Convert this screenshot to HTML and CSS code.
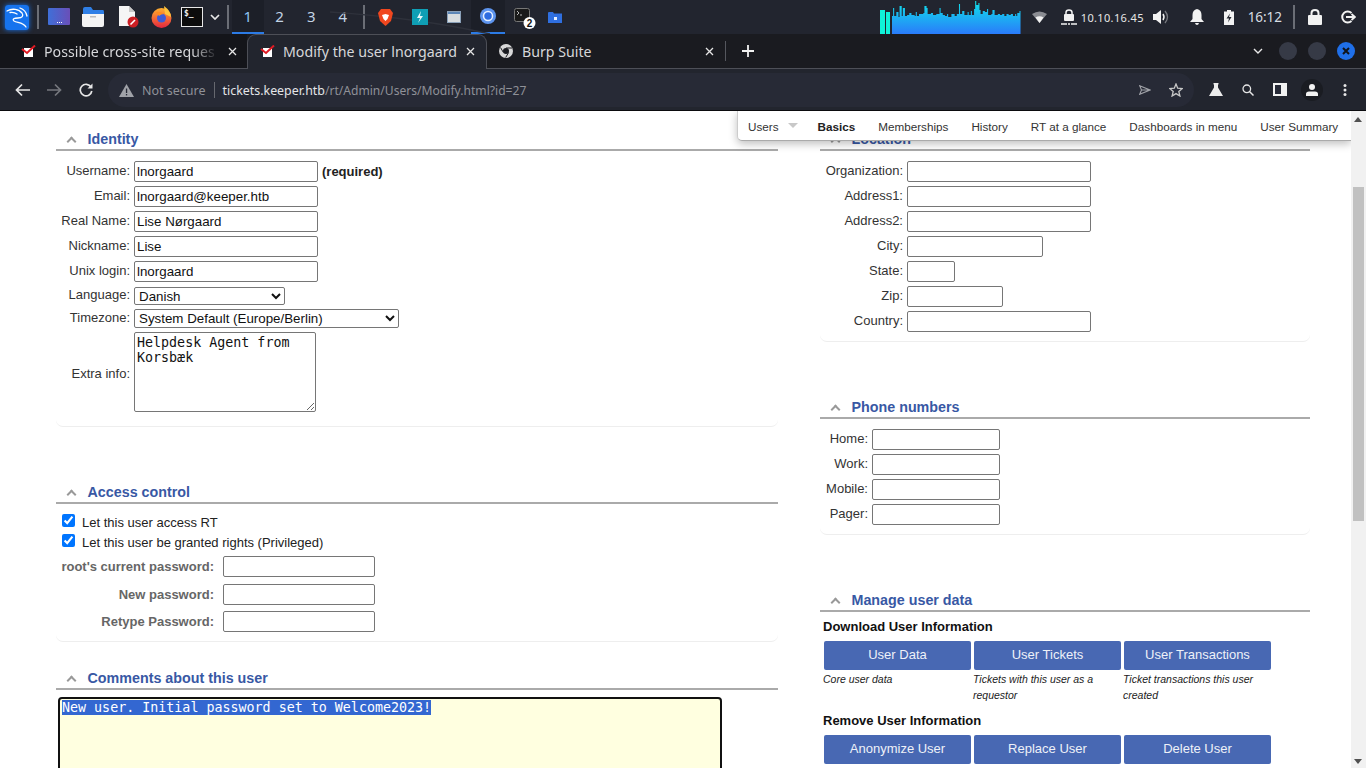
FILE: index.html
```html
<!DOCTYPE html>
<html lang="en">
<head>
    <meta charset="UTF-8">
    <title>Modify the user lnorgaard</title>
    <link rel="stylesheet" href="styles.css">
</head>
<body>

    <!-- desktop panel -->
    <div class="panel">
        <svg class="wall" width="1366" height="34" viewBox="0 0 1366 34"><path d="M330 12 Q420 18 490 34" fill="none" stroke="#2e313b" stroke-width="1.5"/></svg>
        <div class="slot s-kali">
            <svg width="24" height="25" viewBox="0 0 24 25"><rect width="24" height="25" rx="3" fill="#1673ee"/><path d="M2 6 C7 3 14 4 17 8 C19 11 17 13 13 13 C9 13 7 14 9 16 C12 18 18 17 21 22 M5 7.500 C8 7 10 7.500 12 9 M15 3 C18 4 21 6 22 11" fill="none" stroke="#fff" stroke-width="1.300" stroke-linecap="round"/></svg>
        </div>
        <div class="sep"></div>
        <div class="slot s-desk">
            <svg width="22" height="18" viewBox="0 0 22 18"><defs><linearGradient id="dk" x1="0" x2="1"><stop offset="0" stop-color="#3f6fd8"/><stop offset="1" stop-color="#6a4fb8"/></linearGradient></defs><rect width="22" height="17" rx="1" fill="url(#dk)"/><rect x="9" y="14" width="1" height="1" fill="#fff"/><rect x="11" y="14" width="1" height="1" fill="#fff"/><rect x="13" y="14" width="1" height="1" fill="#fff"/></svg>
        </div>
        <div class="slot s-files">
            <svg width="22" height="20" viewBox="0 0 22 20"><path d="M1 2 Q1 0 3 0 H9 L11 3 H21 Q22 3 22 5 V7 H1Z" fill="#2f7fe6"/><path d="M0 7 H22 V18 Q22 20 20 20 H2 Q0 20 0 18Z" fill="#f4f4f4"/><rect x="8" y="9" width="6" height="1.5" fill="#bbb"/></svg>
        </div>
        <div class="slot s-doc">
            <svg width="22" height="22" viewBox="0 0 22 22"><path d="M1 0 H11 L17 6 V20 H1Z" fill="#f5f5f5"/><path d="M11 0 L17 6 H11Z" fill="#c8c8c8"/><circle cx="15" cy="16" r="5.500" fill="#cc1f24"/><path d="M12.500 18.500 L17 14" stroke="#fff" stroke-width="1.600"/></svg>
        </div>
        <div class="slot s-fox">
            <svg width="21" height="22" viewBox="0 0 21 22"><defs><linearGradient id="fx" x1="0" y1="0" x2="0" y2="1"><stop offset="0" stop-color="#ffb02e"/><stop offset="1" stop-color="#e5263f"/></linearGradient></defs><circle cx="10.500" cy="12" r="10" fill="url(#fx)"/><path d="M13 0 Q20 5 20 11 L14 8Z" fill="#ffc33a"/><circle cx="10.500" cy="12" r="4.500" fill="#3f5bd6"/><path d="M5 6 Q9 5 13 8 Q10 8 8 10Z" fill="#ff8a1f"/></svg>
        </div>
        <div class="slot s-term">
            <div class="term-box">$_</div>
        </div>
        <div class="slot s-more">
            <svg width="10" height="6" viewBox="0 0 10 6"><path d="M1 1 L5 5 L9 1" fill="none" stroke="#e8e8e8" stroke-width="1.700"/></svg>
        </div>
        <div class="sep s-sep2"></div>
        <div class="ws active">1</div>
        <div class="ws">2</div>
        <div class="ws">3</div>
        <div class="ws">4</div>
        <div class="sep s-sep3"></div>
        <div class="slot s-brave">
            <svg width="15" height="17" viewBox="0 0 15 17"><path d="M3 0 H12 L15 4 L13 12 L7.500 17 L2 12 L0 4Z" fill="#f0471f"/><path d="M4 6 L7.500 5 L11 6 L9.500 10 L7.500 12 L5.500 10Z" fill="#fff"/></svg>
        </div>
        <div class="slot s-bolt">
            <svg width="16" height="16" viewBox="0 0 16 16"><rect width="16" height="16" fill="#0f9fb5"/><path d="M9 2 L5 9 H8 L6 14 L11 7 H8Z" fill="#e6f7fa"/></svg>
        </div>
        <div class="slot s-win">
            <svg width="14" height="12" viewBox="0 0 14 12"><rect x=".5" y=".5" width="13" height="11" fill="#d8dde0" stroke="#8aa0b8"/><rect x="1" y="1" width="12" height="2" fill="#5d87b8"/></svg>
        </div>
        <div class="ws-app">
            <svg width="16" height="16" viewBox="0 0 16 16"><circle cx="8" cy="8" r="8" fill="#5d94ee"/><circle cx="8" cy="8" r="4.500" fill="#2d6be0" stroke="#e4efff" stroke-width="1.500"/></svg>
        </div>
        <div class="slot s-term2">
            <svg width="22" height="22" viewBox="0 0 22 22"><rect x=".5" y=".5" width="15" height="13" rx="2" fill="#1a1a1a" stroke="#777"/><path d="M3 3 L5 5 L3 7 M6 7 H8" fill="none" stroke="#ddd" stroke-width=".8"/><circle cx="15.500" cy="15" r="6" fill="#fff"/><text x="15.500" y="18.500" font-size="10" font-weight="700" text-anchor="middle" font-family="Liberation Sans" fill="#111">2</text></svg>
        </div>
        <div class="slot s-folder">
            <svg width="14" height="11" viewBox="0 0 14 11"><path d="M0 1 Q0 0 1 0 H5 L6 1.500 H14 V11 H0Z" fill="#2f6fe0"/><rect x="6" y="5" width="3" height="3" fill="#e8f0ff"/></svg>
        </div>

        <div class="tray">
            <div class="cpu">
                <svg width="141" height="34" viewBox="0 0 141 34"><defs><linearGradient id="cp" x1="0" y1="0" x2="0" y2="1"><stop offset="0" stop-color="#0fe3ea"/><stop offset="1" stop-color="#2a7bfa"/></linearGradient></defs>
                    <rect x="0" y="10" width="5" height="24" fill="#0ff2d8"/><rect x="6" y="12" width="4" height="24" fill="#0ff2d8"/>
                    <path transform="translate(12 0) scale(1.08 1) translate(-12 0)" fill="url(#cp)" d="M12 34 V16 h1 V8 h1 V16 h2 V12 h2 V17 h1 V6 h2 V16 h1 V8 h2 V16 h2 V15 h2 V13 h2 V15 h3 V16 h1 V12 h1 V16 h2 V14 h4 V13 h1 V6 h2 V8 h1 V14 h3 V13 h2 V15 h3 V14 h3 V8 h1 V13 h2 V15 h2 V16 h2 V14 h1 V17 h3 V14 h3 V16 h2 V14 h2 V4 h1 V14 h2 V11 h2 V15 h3 V12 h1 V15 h2 V11 h1 V15 h2 V9 h1 V1 h1 V5 h2 V3 h1 V10 h1 V14 h2 V11 h2 V12 h2 V9 h1 V15 h3 V14 h1 V10 h2 V15 h3 V14 h2 V15 h2 V14 h2 V16 h2 V14 h2 V15 h2 V14 h2 V16 h2 V14 h1 V16 h1 V13 h2 V11 h1 V34Z"/></svg>
            </div>
            <div class="slot t-wifi">
                <svg width="15" height="12" viewBox="0 0 15 12"><path d="M0 3 Q7.500 -2 15 3 L7.500 12Z" fill="#8a8c92"/><path d="M3.500 6.500 Q7.500 4 11.500 6.500 L7.500 12Z" fill="#f0f0f0"/></svg>
            </div>
            <div class="slot t-lock">
                <svg width="16" height="16" viewBox="0 0 16 16"><rect x="3" y="5" width="10" height="7" rx="1" fill="#f2f2f2"/><path d="M5 5 V3.500 Q5 1 8 1 Q11 1 11 3.500 V5" fill="none" stroke="#f2f2f2" stroke-width="1.500"/><path d="M0 15 H6 M7 15 H9 M10 15 H16" stroke="#f2f2f2" stroke-width="1.500"/></svg>
            </div>
            <div class="ip">10.10.16.45</div>
            <div class="slot t-vol">
                <svg width="17" height="16" viewBox="0 0 17 16"><path d="M0 5 H3 L8 1 V15 L3 11 H0Z" fill="#f2f2f2"/><path d="M10 5 Q12 8 10 11" fill="none" stroke="#f2f2f2" stroke-width="1.500"/><path d="M12 2 Q17 8 12 14" fill="none" stroke="#77797f" stroke-width="1.300"/></svg>
            </div>
            <div class="slot t-bell">
                <svg width="14" height="16" viewBox="0 0 14 16"><path d="M7 0 Q11.500 1 11.500 6 V10 L14 13 H0 L2.500 10 V6 Q2.500 1 7 0Z" fill="#f2f2f2"/><path d="M5 14 H9 Q8.500 16 7 16 Q5.500 16 5 14Z" fill="#f2f2f2"/></svg>
            </div>
            <div class="slot t-batt">
                <svg width="10" height="15" viewBox="0 0 10 15"><path d="M3 0 H7 V1.500 H10 V15 H0 V1.500 H3Z" fill="#f2f2f2"/><path d="M6 3.500 L2.500 8.500 H5 L4 12.500 L7.500 7 H5Z" fill="#23262f"/></svg>
            </div>
            <div class="clock">16:12</div>
            <div class="sep s-sep4"></div>
            <div class="slot t-lock2">
                <svg width="14" height="16" viewBox="0 0 14 16"><rect y="6" width="14" height="10" rx="1" fill="#f2f2f2"/><path d="M3.500 6 V4 Q3.500 1 7 1 Q10.500 1 10.500 4 V6" fill="none" stroke="#f2f2f2" stroke-width="2"/></svg>
            </div>
            <div class="slot t-exit">
                <svg width="15" height="14" viewBox="0 0 15 14"><path d="M10.500 3 A5.500 5.500 0 1 0 10.500 11" fill="none" stroke="#f2f2f2" stroke-width="2"/><path d="M5 7 H13 M10.500 4 L14 7 L10.500 10" fill="none" stroke="#f2f2f2" stroke-width="1.800"/></svg>
            </div>
        </div>
    </div>

    <!-- browser tabs -->
    <div class="tabstrip">
        <div class="tab tab-first">
            <svg class="favicon" width="16" height="13" viewBox="0 0 16 13"><rect x="3" y="3" width="9" height="9" fill="#fff"/><path d="M1 4 L6 8 L14 .5" fill="none" stroke="#e01b24" stroke-width="2"/></svg>
            <span class="tab-title fade">Possible cross-site reques</span>
            <svg class="tab-x" width="9" height="9" viewBox="0 0 9 9"><path d="M1 1 L8 8 M8 1 L1 8" stroke="#e6e6e6" stroke-width="1.300"/></svg>
        </div>
        <div class="tab tab-active">
            <svg class="favicon" width="16" height="13" viewBox="0 0 16 13"><rect x="3" y="3" width="9" height="9" fill="#fff"/><path d="M1 4 L6 8 L14 .5" fill="none" stroke="#e01b24" stroke-width="2"/></svg>
            <span class="tab-title">Modify the user lnorgaard</span>
            <svg class="tab-x" width="9" height="9" viewBox="0 0 9 9"><path d="M1 1 L8 8 M8 1 L1 8" stroke="#e6e6e6" stroke-width="1.300"/></svg>
        </div>
        <div class="tab tab-burp">
            <svg class="favicon" width="14" height="14" viewBox="0 0 14 14"><circle cx="7" cy="7" r="7" fill="#d8d8d8"/><circle cx="7" cy="7" r="3" fill="#1a1b20"/><path d="M7 4 H13 M4.400 8.500 L1.500 3.500 M9.600 8.500 L6.700 13.500" stroke="#1a1b20" stroke-width="1"/></svg>
            <span class="tab-title">Burp Suite</span>
            <svg class="tab-x" width="9" height="9" viewBox="0 0 9 9"><path d="M1 1 L8 8 M8 1 L1 8" stroke="#e6e6e6" stroke-width="1.300"/></svg>
        </div>
        <div class="tab-sep"></div>
        <svg class="tab-plus" width="12" height="12" viewBox="0 0 12 12"><path d="M6 0 V12 M0 6 H12" stroke="#f2f2f2" stroke-width="1.800"/></svg>
        <div class="win-ctrls">
            <svg class="tab-list" width="10" height="6" viewBox="0 0 10 6"><path d="M1 1 L5 5 L9 1" fill="none" stroke="#e8e8e8" stroke-width="1.400"/></svg>
            <div class="win-btn"></div>
            <div class="win-btn"></div>
            <div class="win-btn win-close">
                <svg width="8" height="8" viewBox="0 0 8 8"><path d="M1 1 L7 7 M7 1 L1 7" stroke="#10141c" stroke-width="2"/></svg>
            </div>
        </div>
    </div>

    <!-- address bar -->
    <div class="toolbar">
        <svg class="tool t-back" width="15" height="14" viewBox="0 0 15 14"><path d="M15 7 H2 M7 1.500 L1.500 7 L7 12.500" fill="none" stroke="#e6e6e6" stroke-width="1.700"/></svg>
        <svg class="tool t-fwd" width="15" height="14" viewBox="0 0 15 14"><path d="M0 7 H13 M8 1.500 L13.500 7 L8 12.500" fill="none" stroke="#75777d" stroke-width="1.700"/></svg>
        <svg class="tool t-reload" width="14" height="14" viewBox="0 0 14 14"><path d="M12 4 A5.800 5.800 0 1 0 12.800 8" fill="none" stroke="#e6e6e6" stroke-width="1.700"/><path d="M13.500 0.500 V5.500 H8.500Z" fill="#e6e6e6"/></svg>
        <div class="omnibox">
            <svg width="15" height="13" viewBox="0 0 15 13"><path d="M7.500 0 L15 13 H0Z" fill="#a0a2a8"/><rect x="6.900" y="4.500" width="1.300" height="4.500" fill="#262936"/><rect x="6.900" y="10" width="1.300" height="1.400" fill="#262936"/></svg>
            <span class="not-secure">Not secure</span>
            <span class="omni-sep"></span>
            <span class="url"><span class="host">tickets.keeper.htb</span>/rt/Admin/Users/Modify.html?id=27</span>
            <svg class="omni-send" width="12" height="10" viewBox="0 0 12 10"><path d="M.7 .7 L11 5 L.7 9.300 L2.500 5Z M2.500 5 H11" fill="none" stroke="#a0a2a8" stroke-width="1.100"/></svg>
            <svg class="omni-star" width="14" height="14" viewBox="0 0 14 14"><path d="M7 1 L8.700 5.200 L13.300 5.500 L9.800 8.500 L10.900 13 L7 10.600 L3.100 13 L4.200 8.500 L.7 5.500 L5.300 5.200Z" fill="none" stroke="#c8c8c8" stroke-width="1.300"/></svg>
        </div>
        <svg class="tool t-flask" width="14" height="13" viewBox="0 0 14 13"><path d="M4.500 0 H9.500 V1.500 H9 V4.500 L14 13 H0 L5 4.500 V1.500 H4.500Z" fill="#ececec"/></svg>
        <svg class="tool t-search" width="12" height="12" viewBox="0 0 12 12"><circle cx="4.800" cy="4.800" r="3.800" fill="none" stroke="#e6e6e6" stroke-width="1.300"/><path d="M7.500 7.500 L11.500 11.500" stroke="#e6e6e6" stroke-width="1.500"/></svg>
        <svg class="tool t-side" width="14" height="13" viewBox="0 0 14 13"><rect width="14" height="13" fill="#f2f2f2"/><rect x="2" y="2" width="6" height="9" fill="#262936"/></svg>
        <div class="avatar">
            <svg width="12" height="12" viewBox="0 0 12 12"><circle cx="6" cy="3" r="3" fill="#f2f2f2"/><path d="M0 12 V10 Q0 7.500 3 7.500 H9 Q12 7.500 12 10 V12Z" fill="#f2f2f2"/></svg>
        </div>
        <svg class="tool t-kebab" width="4" height="12" viewBox="0 0 4 12"><circle cx="2" cy="1.500" r="1.500" fill="#e6e6e6"/><circle cx="2" cy="6" r="1.500" fill="#e6e6e6"/><circle cx="2" cy="10.500" r="1.500" fill="#e6e6e6"/></svg>
    </div>

    <!-- page -->
    <div class="viewport">
        <div class="page">
            <div class="col">
                <div class="box box-identity">
                    <h2 class="box-title"><span class="chev"></span>Identity</h2>
                    <div class="rows rows-identity">
                        <label>Username:</label><div class="field"><input class="w-184" type="text" value="lnorgaard"> <b class="req">(required)</b></div>
                        <label>Email:</label><div class="field"><input class="w-184" type="text" value="lnorgaard@keeper.htb"></div>
                        <label>Real Name:</label><div class="field"><input class="w-184" type="text" value="Lise Nørgaard"></div>
                        <label>Nickname:</label><div class="field"><input class="w-184" type="text" value="Lise"></div>
                        <label>Unix login:</label><div class="field"><input class="w-184" type="text" value="lnorgaard"></div>
                        <label>Language:</label><div class="field"><select class="sel-lang"><option>Danish</option></select></div>
                        <label>Timezone:</label><div class="field"><select class="sel-tz"><option>System Default (Europe/Berlin)</option></select></div>
                        <label class="label-extra">Extra info:</label><div class="field"><textarea class="extra" rows="5" cols="20">Helpdesk Agent from Korsbæk</textarea></div>
                    </div>
                </div>

                <div class="box box-access">
                    <h2 class="box-title"><span class="chev"></span>Access control</h2>
                    <div class="checks">
                        <label class="check"><input type="checkbox" checked>Let this user access RT</label>
                        <label class="check"><input type="checkbox" checked>Let this user be granted rights (Privileged)</label>
                    </div>
                    <div class="rows rows-pass">
                        <label>root's current password:</label><div class="field"><input class="w-152" type="password"></div>
                        <label>New password:</label><div class="field"><input class="w-152" type="password"></div>
                        <label>Retype Password:</label><div class="field"><input class="w-152" type="password"></div>
                    </div>
                </div>

                <div class="box box-comments">
                    <h2 class="box-title"><span class="chev"></span>Comments about this user</h2>
                    <div class="comment-box"><span class="selected">New user. Initial password set to Welcome2023!</span></div>
                </div>
            </div>

            <div class="col">
                <div class="box box-location">
                    <h2 class="box-title"><span class="chev"></span>Location</h2>
                    <div class="rows rows-location">
                        <label>Organization:</label><div class="field"><input class="w-184" type="text"></div>
                        <label>Address1:</label><div class="field"><input class="w-184" type="text"></div>
                        <label>Address2:</label><div class="field"><input class="w-184" type="text"></div>
                        <label>City:</label><div class="field"><input class="w-136" type="text"></div>
                        <label>State:</label><div class="field"><input class="w-48" type="text"></div>
                        <label>Zip:</label><div class="field"><input class="w-96" type="text"></div>
                        <label>Country:</label><div class="field"><input class="w-184" type="text"></div>
                    </div>
                </div>

                <div class="box box-phone">
                    <h2 class="box-title"><span class="chev"></span>Phone numbers</h2>
                    <div class="rows rows-phone">
                        <label>Home:</label><div class="field"><input class="w-128" type="text"></div>
                        <label>Work:</label><div class="field"><input class="w-128" type="text"></div>
                        <label>Mobile:</label><div class="field"><input class="w-128" type="text"></div>
                        <label>Pager:</label><div class="field"><input class="w-128" type="text"></div>
                    </div>
                </div>

                <div class="box box-manage">
                    <h2 class="box-title"><span class="chev"></span>Manage user data</h2>
                    <div class="manage-head">Download User Information</div>
                    <div class="btn-grid">
                        <div class="btn-cell"><a class="btn">User Data</a><p>Core user data</p></div>
                        <div class="btn-cell"><a class="btn">User Tickets</a><p>Tickets with this user as a requestor</p></div>
                        <div class="btn-cell"><a class="btn">User Transactions</a><p>Ticket transactions this user created</p></div>
                    </div>
                    <div class="manage-head head-remove">Remove User Information</div>
                    <div class="btn-grid">
                        <div class="btn-cell"><a class="btn">Anonymize User</a></div>
                        <div class="btn-cell"><a class="btn">Replace User</a></div>
                        <div class="btn-cell"><a class="btn">Delete User</a></div>
                    </div>
                </div>
            </div>
        </div>

        <!-- page menu stuck to the top -->
        <div class="page-menu">
            <a>Users<span class="menu-arrow"></span></a>
            <a class="current">Basics</a>
            <a>Memberships</a>
            <a>History</a>
            <a>RT at a glance</a>
            <a>Dashboards in menu</a>
            <a>User Summary</a>
        </div>

        <div class="scrollbar">
            <span class="arrow-up"></span>
            <span class="thumb"></span>
            <span class="arrow-down"></span>
        </div>
    </div>

</body>
</html>
```

FILE: styles.css
```css
html, body {
    margin: 0;
    padding: 0;
}
body {
    width: 1366px;
    height: 768px;
    overflow: hidden;
    display: flex;
    flex-direction: column;
    font-family: "Liberation Sans", Arial, sans-serif;
    font-size: 13px;
    background: #fff;
}

/* desktop panel */
.panel {
    position: relative;
    height: 34px;
    flex: none;
    display: flex;
    align-items: center;
    background: #22252f;
    color: #e6e6e6;
}
.wall {
    position: absolute;
    left: 0;
    top: 0;
    pointer-events: none;
}
.slot {
    display: flex;
    align-items: center;
    justify-content: center;
    position: relative;
}
.sep {
    width: 2px;
    height: 24px;
    background: #6b6e76;
    flex: none;
}
.s-kali { margin-left: 5px; width: 24px; box-shadow: 0 0 5px #1673ee; border-radius: 3px; }
.panel > .sep { margin-left: 8px; }
.s-desk { margin-left: 9px; width: 22px; }
.s-files { margin-left: 12px; width: 22px; }
.s-doc { margin-left: 14px; width: 22px; }
.s-fox { margin-left: 11px; width: 21px; }
.s-term { margin-left: 9px; width: 22px; }
.s-more { margin-left: 7px; width: 10px; }
.panel > .s-sep2 { margin-left: 7px; margin-right: 3px; }
.term-box {
    height: 18px;
    width: 18px;
    border: 1px solid #e8e8e8;
    background: #0c0c0c;
    font-family: "DejaVu Sans Mono", monospace;
    font-size: 8px;
    font-weight: bold;
    line-height: 12px;
    padding-left: 2px;
    color: #eee;
}
.ws {
    width: 31.7px;
    height: 34px;
    flex: none;
    box-sizing: border-box;
    text-align: center;
    line-height: 32px;
    font-family: "Noto Sans", sans-serif;
    font-size: 15px;
    color: #c3d4e6;
}
.ws.active {
    background: #1c1f28;
    border-bottom: 2px solid #2c7be5;
    color: #8fc3f2;
}
.panel > .s-sep3 { margin-left: 4px; }
.s-brave { margin-left: 13px; width: 15px; }
.s-bolt { margin-left: 19px; width: 16px; }
.s-win { margin-left: 19px; width: 14px; }
.ws-app {
    margin-left: 10px;
    width: 34px;
    height: 34px;
    box-sizing: border-box;
    display: flex;
    align-items: center;
    justify-content: center;
    background: #1c1f28;
    border-bottom: 2px solid #2c7be5;
}
.s-term2 { margin-left: 9px; width: 22px; top: 2px; }
.s-folder { margin-left: 12px; width: 15px; }

.tray {
    margin-left: 317px;
    display: flex;
    align-items: center;
    height: 34px;
}
.cpu {
    width: 141px;
    height: 34px;
}
.cpu svg { display: block; }
.t-wifi { margin-left: 11px; width: 15px; }
.t-lock { margin-left: 14px; width: 16px; }
.ip {
    margin-left: 4px;
    width: 66px;
    font-family: "Noto Sans", sans-serif;
    font-size: 11px;
    letter-spacing: .35px;
    white-space: nowrap;
    color: #e6e6e6;
}
.t-vol { margin-left: 6px; width: 17px; }
.t-bell { margin-left: 20px; width: 14px; }
.t-batt { margin-left: 20px; width: 10px; }
.clock {
    margin-left: 14px;
    width: 33px;
    font-family: "Noto Sans", sans-serif;
    font-size: 13.5px;
    letter-spacing: -.1px;
    color: #d8dde2;
}
.tray > .s-sep4 { margin-left: 12px; }
.t-lock2 { margin-left: 13px; width: 14px; }
.t-exit { margin-left: 19px; width: 15px; }

/* tab strip */
.tabstrip {
    height: 35px;
    flex: none;
    box-sizing: border-box;
    display: flex;
    align-items: center;
    background: #1a1b20;
    border-bottom: 1px solid #4d4f57;
    font-family: "Noto Sans", sans-serif;
    font-size: 14.2px;
    color: #d6d7da;
    position: relative;
}
.tab {
    height: 34px;
    display: flex;
    align-items: center;
    box-sizing: border-box;
    flex: none;
    white-space: nowrap;
}
.tab-first {
    width: 247px;
    padding-left: 21px;
    background: #14151a;
}
.tab-first .favicon { margin-right: 7px; }
.tab-first .tab-title { width: 174px; }
.tab-first .tab-x { margin-left: 10px; }
.fade {
    -webkit-mask-image: linear-gradient(to right, #000 85%, transparent);
    mask-image: linear-gradient(to right, #000 85%, transparent);
}
.tab-active {
    width: 240px;
    height: 35px;
    padding-left: 12px;
    padding-bottom: 2px;
    margin-top: 1px;
    background: #22252e;
    border: 1px solid #4d4f57;
    border-bottom: none;
    border-radius: 9px 9px 0 0;
}
.tab-active .favicon { margin-right: 7px; }
.tab-active .tab-title { width: 174px; }
.tab-active .tab-x { margin-left: 9px; }
.tab-burp {
    width: 238px;
    padding-left: 12px;
}
.tab-burp .favicon { margin-right: 9px; }
.tab-burp .tab-title { width: 183px; }
.tab-sep {
    width: 1px;
    height: 20px;
    background: #55575e;
    flex: none;
}
.tab-plus { margin-left: 16px; }
.win-ctrls {
    margin-left: auto;
    display: flex;
    align-items: center;
    gap: 11px;
    padding-right: 11px;
}
.tab-list { margin-right: 5px; }
.win-btn {
    width: 18px;
    height: 18px;
    border-radius: 50%;
    background: #363a46;
    border: 0;
    display: flex;
    align-items: center;
    justify-content: center;
}
.win-close { background: #1f6fe8; }

/* address bar */
.toolbar {
    height: 42px;
    flex: none;
    box-sizing: border-box;
    display: flex;
    align-items: center;
    background: #22252e;
    border-bottom: 1px solid #0b0b0e;
}
.tool { flex: none; }
.t-back { margin-left: 15px; }
.t-fwd { margin-left: 17px; }
.t-reload { margin-left: 17px; }
.omnibox {
    margin-left: 15px;
    width: 1086px;
    height: 34px;
    box-sizing: border-box;
    padding-left: 11px;
    padding-top: 1px;
    display: flex;
    align-items: center;
    background: #272a36;
    border-radius: 17px;
    font-family: "Noto Sans", sans-serif;
    font-size: 12.5px;
    color: #8f9198;
}
.not-secure { margin-left: 8px; }
.omni-sep {
    width: 1px;
    height: 16px;
    background: #66686f;
    margin: 0 8px 0 8px;
}
.url { font-size: 12.1px; }
.host { color: #e4e5e8; font-size: 12.4px; }
.omni-send { margin-left: auto; }
.omni-star { margin-left: 18px; margin-right: 11px; }
.t-flask { margin-left: 15px; }
.t-search { margin-left: 19px; }
.t-side { margin-left: 19px; }
.avatar {
    margin-left: 14px;
    width: 22px;
    height: 22px;
    border-radius: 50%;
    background: #1a1c22;
    display: flex;
    align-items: center;
    justify-content: center;
    flex: none;
}
.t-kebab { margin-left: 20px; }

/* page */
.viewport {
    position: relative;
    flex: 1;
    overflow: hidden;
    background: #fff;
}
.page {
    display: grid;
    grid-template-columns: 722px 490px;
    column-gap: 42px;
    padding: 18px 0 0 56px;
}
.box {
    border-bottom: 1px solid #eee;
    border-radius: 0 0 7px 7px;
}
.box-title {
    margin: 0;
    height: 20px;
    line-height: 20px;
    padding-left: 10px;
    border-bottom: 2px solid #aaa;
    font-size: 14.3px;
    font-weight: bold;
    color: #3858a4;
    box-sizing: content-box;
    display: flex;
    align-items: center;
}
.chev {
    width: 7px;
    height: 7px;
    margin: 5px 12.5px 0 2px;
    border-top: 2px solid #999;
    border-left: 2px solid #999;
    transform: rotate(45deg);
    box-sizing: border-box;
}
.rows {
    display: grid;
    row-gap: 4px;
    align-items: center;
}
.rows label {
    text-align: right;
    padding-bottom: 2px;
    color: #333;
}
.rows .label-extra {
    padding-bottom: 0;
    padding-top: 2px;
}
.field {
    display: flex;
    align-items: center;
    min-height: 0;
}
.field input[type="text"], .field input[type="password"] {
    height: 21px;
    box-sizing: border-box;
    margin: 0;
    padding: 1px 2px;
    border: 1px solid #767676;
    border-radius: 2px;
    background: #fff;
    font-family: "Liberation Sans", Arial, sans-serif;
    font-size: 13.33px;
    color: #111;
}
.w-184 { width: 184px; }
.w-152 { width: 152px; }
.w-136 { width: 136px; }
.w-128 { width: 128px; }
.w-96 { width: 96px; }
.w-48 { width: 48px; }
.req {
    margin-left: 4px;
    color: #222;
}
.rows-identity {
    grid-template-columns: 74px 1fr;
    column-gap: 4px;
    padding-top: 10px;
    padding-bottom: 14px;
}
select {
    margin: 0;
    padding: 0;
    box-sizing: border-box;
    border: 1px solid #767676;
    border-radius: 2px;
    background-color: #fff;
    font-family: "Liberation Sans", Arial, sans-serif;
    font-size: 13.33px;
    color: #111;
}
.sel-lang { width: 151px; height: 18px; margin-top: 1px; }
.sel-tz { width: 265px; height: 19px; }
.extra {
    display: block;
    width: 182px;
    height: 80px;
    box-sizing: border-box;
    margin: 0;
    padding: 2px;
    border: 1px solid #767676;
    border-radius: 2px;
    font-family: "DejaVu Sans Mono", monospace;
    font-size: 13.33px;
    line-height: 15px;
    color: #111;
}
.box-access { margin-top: 55px; }
.checks {
    padding: 8px 0 0 6px;
}
.check {
    display: flex;
    align-items: center;
    height: 20px;
    color: #222;
}
.check input {
    margin: 0 7px 0 0;
    width: 13px;
    height: 13px;
    position: relative;
    top: -2px;
}
.rows-pass {
    grid-template-columns: 158px 1fr;
    column-gap: 9px;
    row-gap: 6.5px;
    padding-top: 4px;
    padding-bottom: 9px;
}
.rows-pass label {
    padding-bottom: 0;
    font-weight: bold;
    color: #666;
}
.box-comments {
    margin-top: 26px;
    border: none;
}
.comment-box {
    margin: 7px 0 0 2px;
    width: 664px;
    height: 120px;
    box-sizing: border-box;
    padding: 1px 2px;
    border: 2px solid #111;
    border-radius: 4px;
    background: #ffffe0;
    font-family: "DejaVu Sans Mono", monospace;
    font-size: 13.33px;
    line-height: 15.5px;
}
.selected {
    background: #3367d1;
    color: #fff;
}
.rows-location {
    grid-template-columns: 83px 1fr;
    column-gap: 4px;
    padding-top: 10px;
    padding-bottom: 9px;
}
.box-phone { margin-top: 55px; }
.rows-phone {
    grid-template-columns: 48px 1fr;
    column-gap: 4px;
    padding-top: 10px;
    padding-bottom: 9px;
}
.box-manage {
    margin-top: 55px;
    border: none;
}
.manage-head {
    margin: 6px 0 0 3px;
    height: 18px;
    line-height: 18px;
    font-weight: bold;
    color: #111;
}
.head-remove { margin-top: 0; }
.btn-grid {
    display: grid;
    grid-template-columns: repeat(3, 147px);
    column-gap: 3px;
    margin: 5px 0 0 4px;
}
.btn {
    display: block;
    height: 29px;
    line-height: 27px;
    text-align: center;
    background: #4868b3;
    color: #eef1f8;
    border-radius: 2px;
}
.btn-cell p {
    margin: 1px 0 9px -1px;
    font-size: 10.5px;
    font-style: italic;
    line-height: 16px;
    height: 32px;
    color: #222;
}

/* sticky page menu */
.page-menu {
    position: absolute;
    left: 737px;
    top: 0;
    width: 614px;
    height: 30px;
    box-sizing: border-box;
    display: flex;
    align-items: center;
    padding-left: 10px;
    padding-top: 1px;
    background: #fff;
    border-bottom: 1px solid #aaa;
    border-left: 1px solid #ccc;
    border-radius: 0 0 0 5px;
    box-shadow: 0 3px 8px rgba(0, 0, 0, .25);
    font-size: 11.7px;
    color: #333;
}
.page-menu a {
    margin-right: 23px;
    white-space: nowrap;
}
.page-menu a.current {
    font-weight: bold;
    color: #222;
}
.menu-arrow {
    display: inline-block;
    margin-left: 9px;
    margin-right: -3px;
    position: relative;
    top: -3px;
    border-left: 5px solid transparent;
    border-right: 5px solid transparent;
    border-top: 5px solid #c8c8c8;
}

/* scrollbar */
.scrollbar {
    position: absolute;
    right: 0;
    top: 0;
    bottom: 0;
    width: 15px;
    background: #f1f1f1;
}
.thumb {
    position: absolute;
    left: 2px;
    top: 76px;
    width: 11px;
    height: 334px;
    background: #c1c1c1;
}
.arrow-up, .arrow-down {
    position: absolute;
    left: 3px;
    border-left: 4px solid transparent;
    border-right: 4px solid transparent;
}
.arrow-up {
    top: 6px;
    border-bottom: 5px solid #505050;
}
.arrow-down {
    bottom: 4px;
    border-top: 5px solid #505050;
}
```
